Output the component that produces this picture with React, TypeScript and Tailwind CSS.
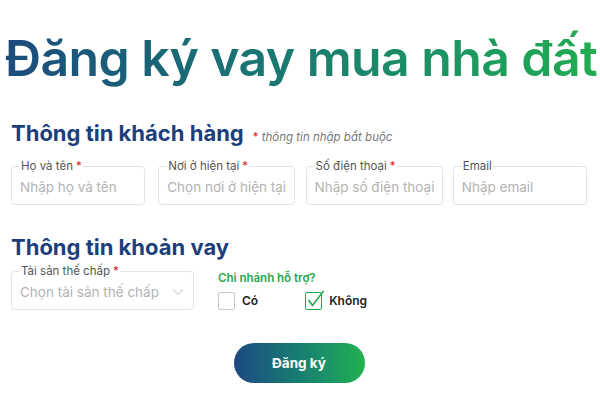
const font = { fontFamily: '"Inter", "Noto Sans", sans-serif' };

function Field({
  label,
  placeholder,
  required,
  select,
  className,
}: {
  label: string;
  placeholder: string;
  required?: boolean;
  select?: boolean;
  className?: string;
}) {
  return (
    <fieldset
      className={`h-[45px] rounded-[4px] border border-[#e3e3e3] px-[8px] ${className ?? ""}`}
    >
      <legend className="px-[1px] text-[11.5px] leading-[12px] text-[#555]">
        {label}
        {required && <span className="ml-[3px] text-[#e02424]">*</span>}
      </legend>
      <div className="flex items-center justify-between pt-[5px]">
        <span className="whitespace-nowrap overflow-hidden text-[13.5px] leading-[20px] text-[#b3b3b3]">
          {placeholder}
        </span>
        {select && (
          <svg width="12" height="8" viewBox="0 0 12 8" className="mr-[1px] shrink-0">
            <path d="M1 1.5 6 6.5 11 1.5" fill="none" stroke="#bbb" strokeWidth="1" />
          </svg>
        )}
      </div>
    </fieldset>
  );
}

export default function App() {
  return (
    <div className="w-[600px] h-[400px] bg-white overflow-hidden" style={font}>
      <h1 className="pt-[26px] pl-[5px] text-[50px] leading-[64px] font-semibold tracking-[-0.6px] whitespace-nowrap bg-gradient-to-r from-[#1d4a7d] to-[#22ac4f] bg-clip-text text-transparent w-fit">
        Đăng ký vay mua nhà đất
      </h1>

      <div className="px-[11px]">
        <div className="mt-[29px] flex items-baseline">
          <h2 className="text-[22px] leading-[28px] font-bold text-[#1c3f7c]">
            Thông tin khách hàng
          </h2>
          <span className="ml-[9px] text-[11.5px] italic text-[#777]">
            <span className="text-[#e02424] not-italic">* </span>thông tin nhập bắt buộc
          </span>
        </div>

        <div className="mt-[13px] grid grid-cols-4 gap-x-[13px] w-[576px]">
          <Field label="Họ và tên" placeholder="Nhập họ và tên" required />
          <Field label="Nơi ở hiện tại" placeholder="Chọn nơi ở hiện tại" required />
          <Field label="Số điện thoại" placeholder="Nhập số điện thoại" required />
          <Field label="Email" placeholder="Nhập email" />
        </div>

        <h2 className="mt-[28px] text-[22px] leading-[28px] font-bold text-[#1c3f7c]">
          Thông tin khoản vay
        </h2>

        <div className="mt-[4px] flex">
          <Field
            label="Tài sản thế chấp"
            placeholder="Chọn tài sản thế chấp"
            required
            select
            className="w-[183px]"
          />
          <div className="ml-[24px] pt-[5px]">
            <div className="text-[11.5px] font-semibold text-[#22a84c]">Chi nhánh hỗ trợ?</div>
            <div className="mt-[5px] flex items-center">
              <span className="w-[17px] h-[18px] rounded-[2px] border border-[#c8c8c8]" />
              <span className="ml-[7px] text-[12px] font-semibold text-[#222]">Có</span>
              <span className="ml-[47px] relative w-[17px] h-[18px] rounded-[2px] border-[1.5px] border-[#22a84c]">
                <svg
                  width="17"
                  height="18"
                  viewBox="0 0 17 18"
                  overflow="visible"
                  className="absolute -left-[1.5px] -top-[1.5px]"
                >
                  <path
                    d="M3.5 8 7.5 13.5 18.5 -1"
                    fill="none"
                    stroke="#22a84c"
                    strokeWidth="1.6"
                  />
                </svg>
              </span>
              <span className="ml-[7px] text-[12px] font-semibold text-[#222]">Không</span>
            </div>
          </div>
        </div>

        <div className="mt-[33px] flex justify-center pr-[2px]">
          <button className="w-[131px] h-[40px] rounded-full bg-gradient-to-r from-[#1d4880] to-[#22b14c] text-[13.5px] font-bold text-white">
            Đăng ký
          </button>
        </div>
      </div>
    </div>
  );
}
